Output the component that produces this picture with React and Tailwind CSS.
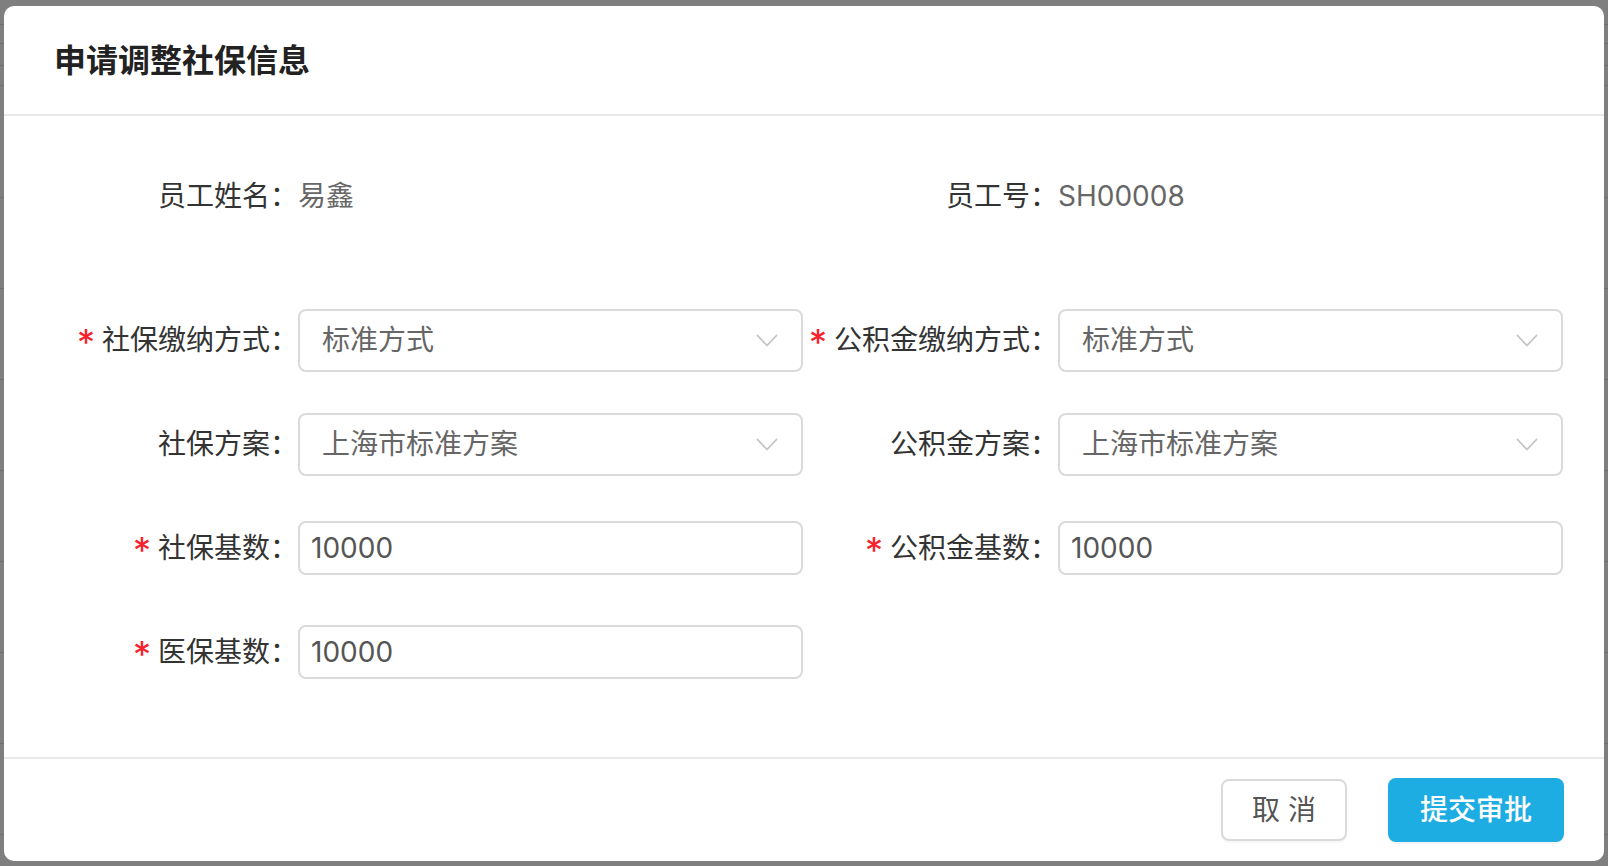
import React from "react";

const FONT = "font-['Inter','Noto_Sans_CJK_SC',sans-serif]";

const Chevron = () => (
  <svg width="22" height="13" viewBox="0 0 22 13" fill="none">
    <polyline points="1.5,1.5 11,11.5 20.5,1.5" stroke="#c4c4c4" strokeWidth="1.8" strokeLinejoin="round" strokeLinecap="round" />
  </svg>
);

const Label = ({ required, children }) => (
  <div className="w-[255px] shrink-0 flex items-center justify-end text-[28px] text-[#333]">
    {required && <span className="text-[#f5222d] text-[36px] mr-[7px] leading-none translate-y-[2px]">*</span>}
    <span>{children}：</span>
  </div>
);

const Select = ({ value }) => (
  <div className="flex-1 h-[63px] flex items-center justify-between border-2 border-[#dadada] rounded-[8px] pl-[22px] pr-[23px] bg-white">
    <span className="text-[28px] text-[#666]">{value}</span>
    <Chevron />
  </div>
);

const Input = ({ value }) => (
  <div className="flex-1 h-[54px] flex items-center border-2 border-[#dadada] rounded-[8px] px-[11px] bg-white">
    <input readOnly defaultValue={value} className="w-full bg-transparent outline-none text-[28px] text-[#555]" />
  </div>
);

const Field = ({ label, required, children }) => (
  <div className="flex items-center h-[104px]">
    <Label required={required}>{label}</Label>
    {children}
  </div>
);

export default function App() {
  const bgRows = [25, 19, 22, 20, 112, 91, 91, 91, 91, 91, 91, 91, 91];

  return (
    <div className={`relative w-[1608px] h-[866px] overflow-hidden bg-white ${FONT}`}>
      {/* page behind the dialog */}
      <div className="flex flex-col">
        {bgRows.map((h, i) => (
          <div key={i} className="border-b border-[#e0e0e0]" style={{ height: h }} />
        ))}
      </div>
      <div className="absolute inset-0 bg-black/50" />

      <div className="absolute left-[4px] top-[6px] w-[1600px] h-[855px] bg-white rounded-[10px] flex flex-col">
        <div className="h-[110px] shrink-0 border-b-2 border-[#e9e9e9] flex items-center pl-[50px] pt-[1px]">
          <h1 className="text-[32px] font-semibold text-[#222]">申请调整社保信息</h1>
        </div>

        <div className="shrink-0 pt-[48px] pb-[53px] pl-[39px] pr-[41px]">
          <div className="grid grid-cols-2 h-[64px]">
            <div className="flex items-center text-[28px]">
              <div className="w-[255px] text-right text-[#333]">员工姓名：</div>
              <div className="text-[#666]">易鑫</div>
            </div>
            <div className="flex items-center text-[28px]">
              <div className="w-[255px] text-right text-[#333]">员工号：</div>
              <div className="text-[#666]">SH00008</div>
            </div>
          </div>

          <div className="grid grid-cols-2 mt-[60px]">
            <Field label="社保缴纳方式" required>
              <Select value="标准方式" />
            </Field>
            <Field label="公积金缴纳方式" required>
              <Select value="标准方式" />
            </Field>
            <Field label="社保方案">
              <Select value="上海市标准方案" />
            </Field>
            <Field label="公积金方案">
              <Select value="上海市标准方案" />
            </Field>
            <Field label="社保基数" required>
              <Input value="10000" />
            </Field>
            <Field label="公积金基数" required>
              <Input value="10000" />
            </Field>
            <Field label="医保基数" required>
              <Input value="10000" />
            </Field>
          </div>
        </div>

        <div className="flex-1 border-t-2 border-[#e9e9e9] flex items-center justify-end gap-[41px] pr-[40px]">
          <button className="w-[126px] h-[62px] border-2 border-[#dadada] rounded-[8px] bg-white text-[28px] text-[#555] shadow-[0_2px_0_rgba(0,0,0,0.03)]">
            取 消
          </button>
          <button className="w-[176px] h-[64px] rounded-[8px] bg-[#1eade3] text-[28px] text-white font-medium shadow-[0_2px_0_rgba(0,0,0,0.045)]">
            提交审批
          </button>
        </div>
      </div>
    </div>
  );
}
